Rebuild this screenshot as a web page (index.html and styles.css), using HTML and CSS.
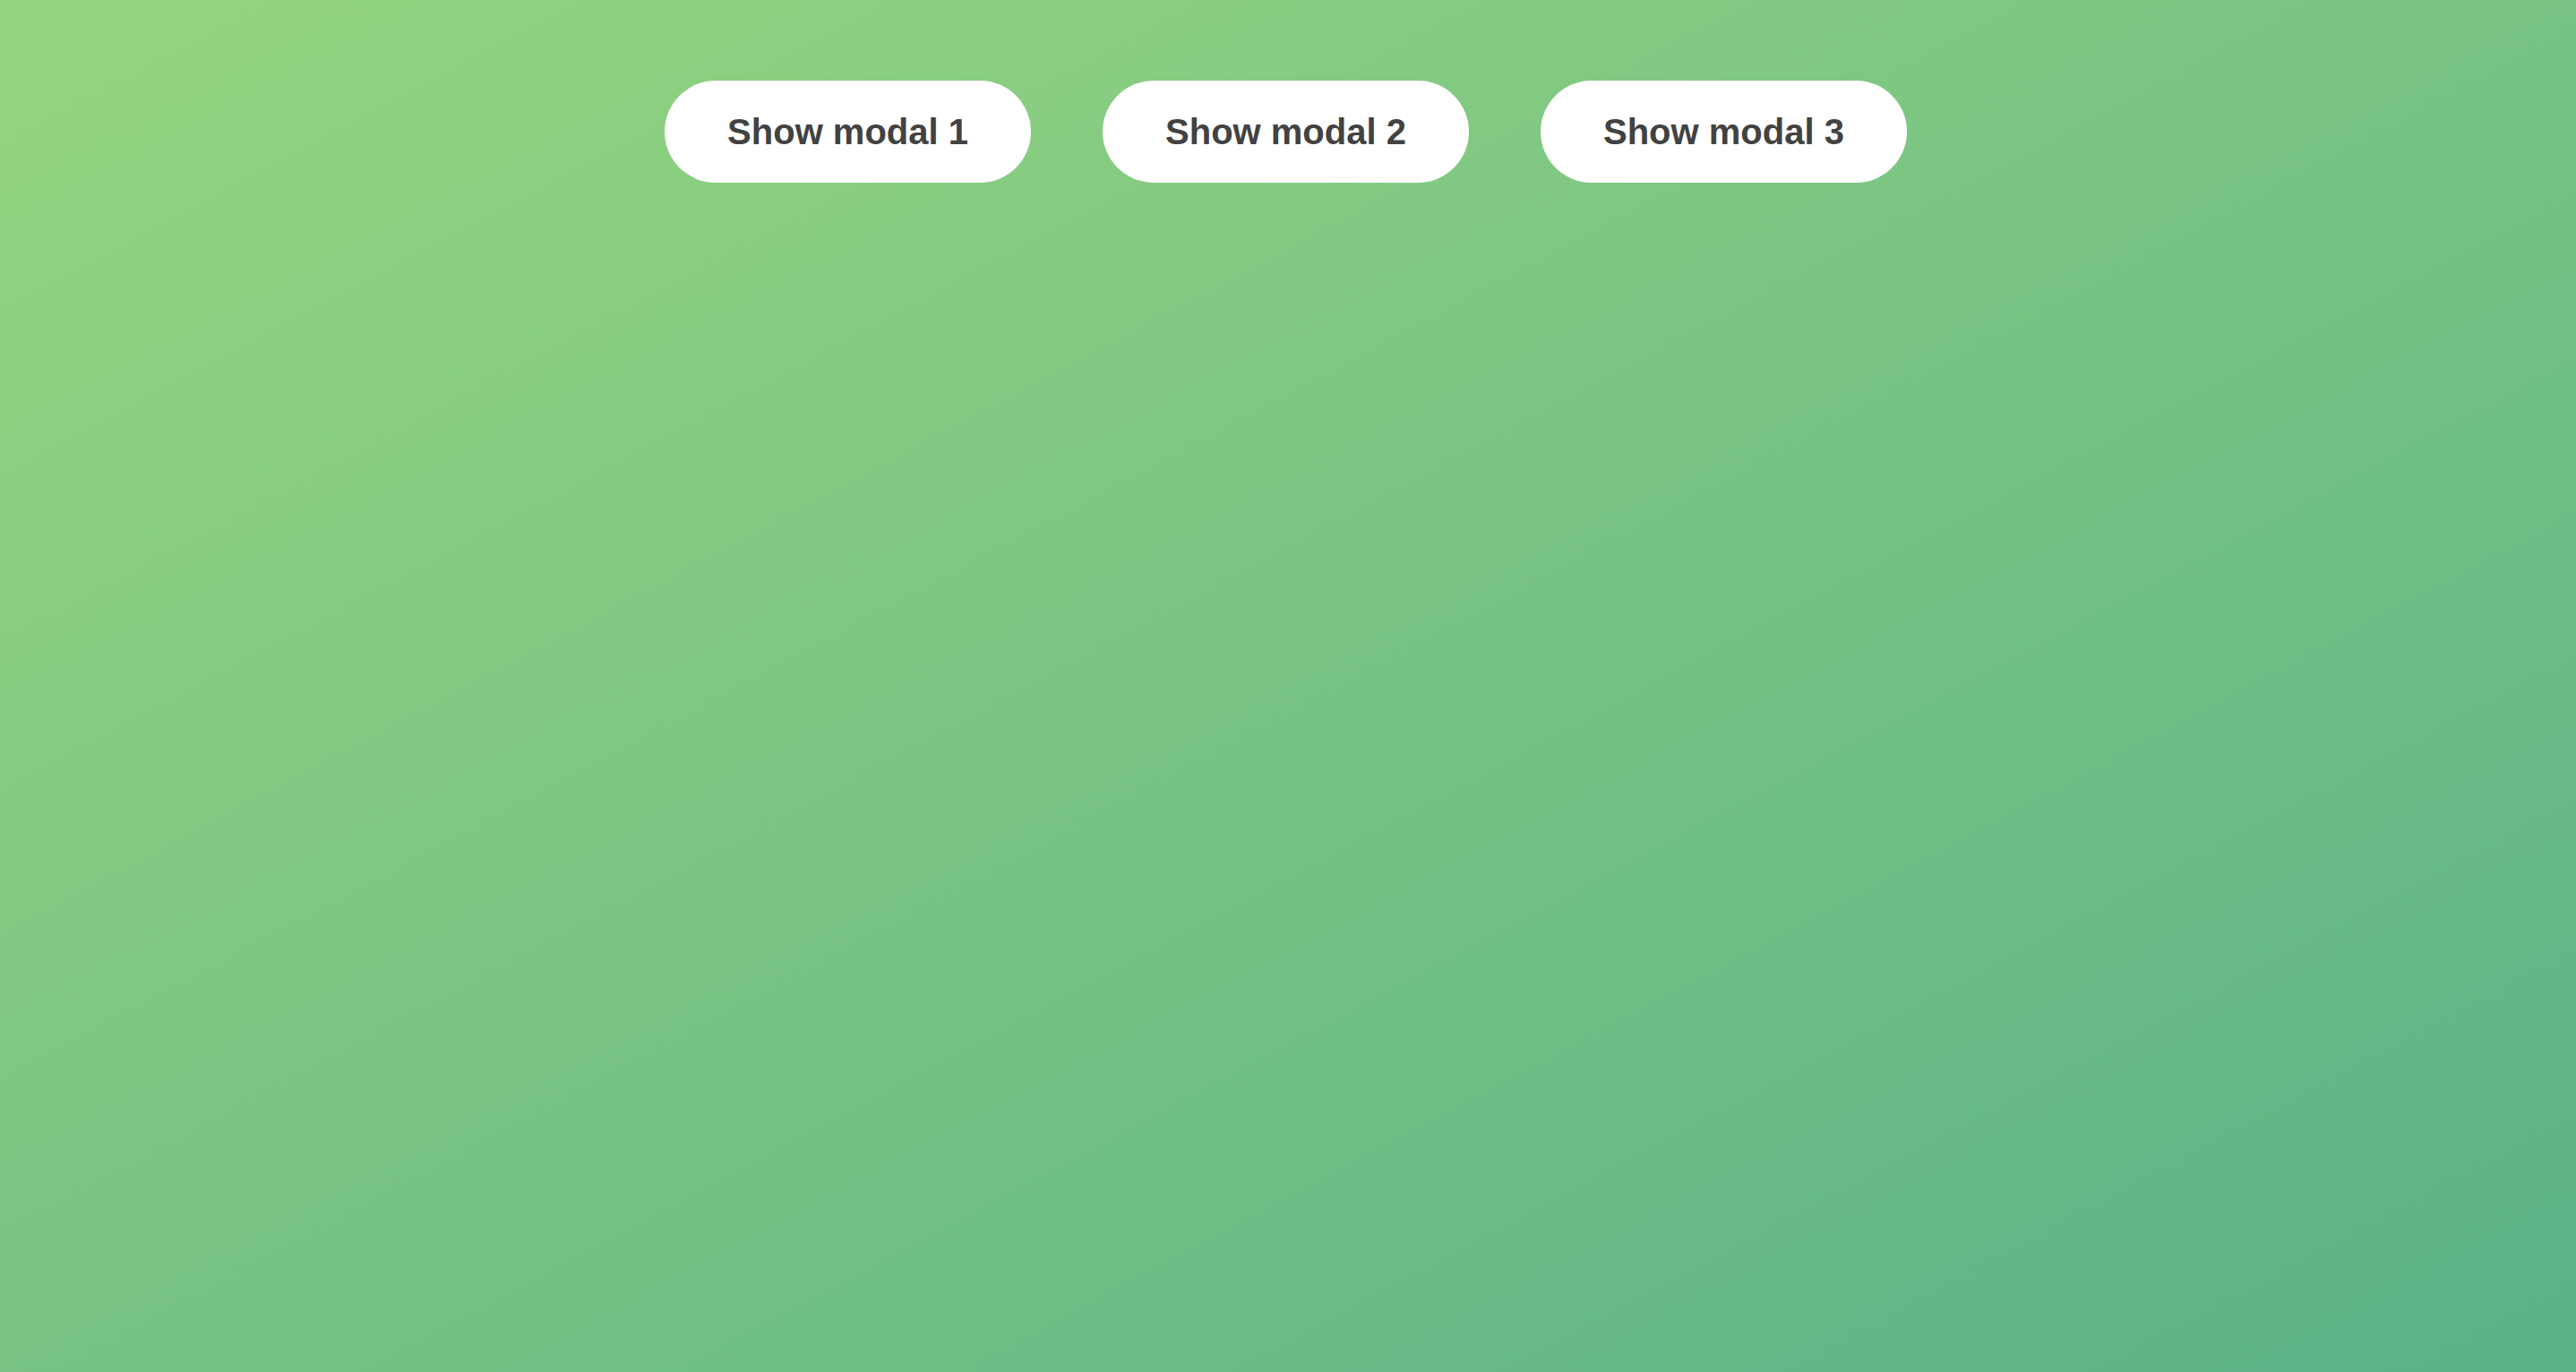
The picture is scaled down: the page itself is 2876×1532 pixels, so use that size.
FILE: index.html
```html
<!DOCTYPE html>
<html lang="en">
<head>
<meta charset="utf-8">
<title>Modals</title>
<link rel="stylesheet" href="styles.css">
</head>
<body>
<main class="page">
  <div class="actions">
    <button class="btn" type="button">Show modal 1</button>
    <button class="btn" type="button">Show modal 2</button>
    <button class="btn" type="button">Show modal 3</button>
  </div>
</main>
</body>
</html>
```

FILE: styles.css
```css
html, body {
  margin: 0;
  padding: 0;
  height: 100%;
}

body {
  background: linear-gradient(to bottom right, #96d57f, #5ab288);
  font-family: "Liberation Sans", Arial, sans-serif;
}

.page {
  min-height: 100vh;
  box-sizing: border-box;
  padding-top: 90px;
}

.actions {
  display: flex;
  justify-content: center;
  gap: 80px;
  padding-right: 5px;
}

.btn {
  font-family: "Liberation Sans", Arial, sans-serif;
  font-size: 40px;
  font-weight: 700;
  line-height: 46px;
  color: #424242;
  background: #ffffff;
  border: none;
  border-radius: 57px;
  padding: 34px 70px;
  margin: 0;
  cursor: pointer;
}
```
